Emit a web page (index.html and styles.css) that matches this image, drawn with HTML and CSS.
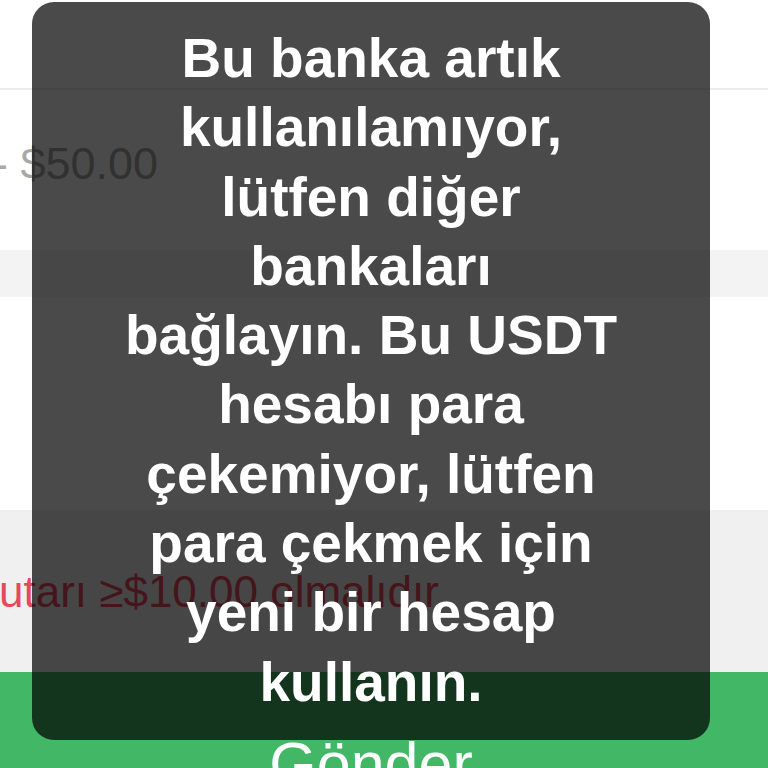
FILE: index.html
```html
<!DOCTYPE html>
<html lang="tr">
<head>
<meta charset="utf-8">
<title>Para çekme</title>
<link rel="stylesheet" href="styles.css">
</head>
<body>
<div class="page">
  <div class="header"></div>
  <div class="amount-row"><span class="range">- $50.00</span></div>
  <div class="band"></div>
  <div class="blank"></div>
  <div class="notice"><span class="error">utarı ≥$10.00 olmalıdır</span></div>
  <div class="submit"><span class="submit-label">Gönder</span></div>
</div>
<div class="toast">
  <p class="toast-text">Bu banka artık<br>kullanılamıyor,<br>lütfen diğer<br>bankaları<br>bağlayın. Bu USDT<br>hesabı para<br>çekemiyor, lütfen<br>para çekmek için<br>yeni bir hesap<br>kullanın.</p>
</div>
</body>
</html>
```

FILE: styles.css
```css
html, body {
  margin: 0;
  padding: 0;
  width: 768px;
  height: 768px;
  overflow: hidden;
  background: #ffffff;
  font-family: "Liberation Sans", Arial, sans-serif;
}

.page {
  display: flex;
  flex-direction: column;
  width: 768px;
  height: 768px;
  overflow: hidden;
}

.header {
  height: 88px;
  flex: none;
  background: #ffffff;
  border-bottom: 2px solid #ececec;
}

.amount-row {
  height: 160px;
  flex: none;
  display: flex;
  align-items: flex-start;
  overflow: hidden;
  background: #ffffff;
}

.range {
  margin-left: -7px;
  margin-top: 49px;
  font-size: 45px;
  line-height: 50px;
  color: #a8a8a8;
  white-space: nowrap;
}

.band {
  height: 47px;
  flex: none;
  background: #f3f3f3;
}

.blank {
  height: 213px;
  flex: none;
  background: #ffffff;
}

.notice {
  height: 162px;
  flex: none;
  background: #f0f0f0;
  display: flex;
  align-items: flex-start;
  overflow: hidden;
}

.error {
  margin-left: -1px;
  margin-top: 57px;
  font-size: 44px;
  line-height: 50px;
  color: #e9485b;
  white-space: nowrap;
}

.submit {
  flex: 1;
  background: #42b867;
  display: flex;
  justify-content: center;
  align-items: flex-start;
  padding-right: 26px;
}

.submit-label {
  margin-top: 57px;
  font-size: 61px;
  line-height: 70px;
  color: #ffffff;
}

.toast {
  position: fixed;
  left: 32px;
  top: 2px;
  width: 678px;
  height: 738px;
  box-sizing: border-box;
  padding-top: 22px;
  border-radius: 22px;
  background: rgba(0, 0, 0, 0.71);
  display: flex;
  justify-content: center;
}

.toast-text {
  margin: 0;
  font-size: 55px;
  line-height: 69.3px;
  font-weight: bold;
  color: #ffffff;
  text-align: center;
}
```
